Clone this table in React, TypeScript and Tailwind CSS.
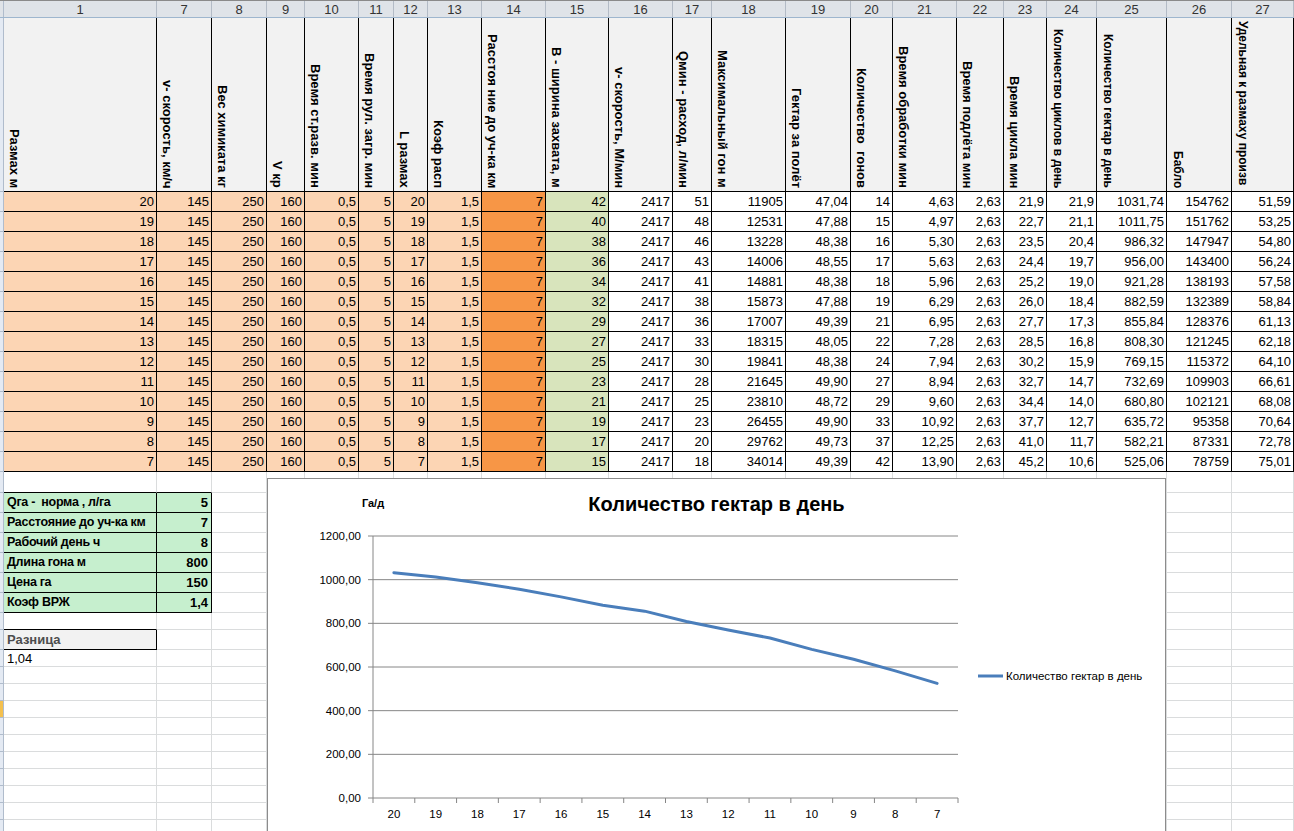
import React from "react";

const COLS =
  "grid grid-cols-[4px_153px_55px_55px_38px_54px_35px_34px_54px_64px_63px_64px_39px_74px_65px_42px_64px_47px_43px_50px_70px_65px_62px]";

const colNumbers = ["1", "7", "8", "9", "10", "11", "12", "13", "14", "15", "16", "17", "18", "19", "20", "21", "22", "23", "24", "25", "26", "27"];

const headers = [
  "Размах м",
  "v- скорость, км/ч",
  "Вес химиката кг",
  "V кр",
  "Время ст.разв. мин",
  "Время рул. загр. мин",
  "L размах",
  "Коэф расп",
  "Расстоя ние до уч-ка км",
  "В - ширина захвата, м",
  "v- скорость, М/мин",
  "Qмин - расход, л/мин",
  "Максимальный гон м",
  "Гектар за полёт",
  "Количество  гонов",
  "Время обработки мин",
  "Время подлёта мин",
  "Время цикла мин",
  "Количество циклов в день",
  "Количество гектар в день",
  "Бабло",
  "Удельная к размаху произв",
];

// m, B, Qмин, гон, га/полёт, гонов, обраб, цикл, циклов, га/день, бабло, удельная
const data = [
  ["20", "42", "51", "11905", "47,04", "14", "4,63", "21,9", "21,9", "1031,74", "154762", "51,59"],
  ["19", "40", "48", "12531", "47,88", "15", "4,97", "22,7", "21,1", "1011,75", "151762", "53,25"],
  ["18", "38", "46", "13228", "48,38", "16", "5,30", "23,5", "20,4", "986,32", "147947", "54,80"],
  ["17", "36", "43", "14006", "48,55", "17", "5,63", "24,4", "19,7", "956,00", "143400", "56,24"],
  ["16", "34", "41", "14881", "48,38", "18", "5,96", "25,2", "19,0", "921,28", "138193", "57,58"],
  ["15", "32", "38", "15873", "47,88", "19", "6,29", "26,0", "18,4", "882,59", "132389", "58,84"],
  ["14", "29", "36", "17007", "49,39", "21", "6,95", "27,7", "17,3", "855,84", "128376", "61,13"],
  ["13", "27", "33", "18315", "48,05", "22", "7,28", "28,5", "16,8", "808,30", "121245", "62,18"],
  ["12", "25", "30", "19841", "48,38", "24", "7,94", "30,2", "15,9", "769,15", "115372", "64,10"],
  ["11", "23", "28", "21645", "49,90", "27", "8,94", "32,7", "14,7", "732,69", "109903", "66,61"],
  ["10", "21", "25", "23810", "48,72", "29", "9,60", "34,4", "14,0", "680,80", "102121", "68,08"],
  ["9", "19", "23", "26455", "49,90", "33", "10,92", "37,7", "12,7", "635,72", "95358", "70,64"],
  ["8", "17", "20", "29762", "49,73", "37", "12,25", "41,0", "11,7", "582,21", "87331", "72,78"],
  ["7", "15", "18", "34014", "49,39", "42", "13,90", "45,2", "10,6", "525,06", "78759", "75,01"],
];

const params = [
  ["Qга -  норма , л/га", "5"],
  ["Расстояние до уч-ка км", "7"],
  ["Рабочий день ч", "8"],
  ["Длина гона м", "800"],
  ["Цена га", "150"],
  ["Коэф ВРЖ", "1,4"],
];

type LowerRow = { h: string; kind: "pre" | "param" | "preDiff" | "diff" | "val" | "blank"; label?: string; value?: string; selected?: boolean };

const lowerRows: LowerRow[] = [
  { h: "h-[21px]", kind: "pre" },
  ...params.map(([label, value]) => ({ h: "h-[20px]", kind: "param" as const, label, value })),
  { h: "h-[17px]", kind: "preDiff" },
  { h: "h-[20px]", kind: "diff" },
  { h: "h-[17px]", kind: "val" },
  { h: "h-[17px]", kind: "blank" },
  { h: "h-[17px]", kind: "blank" },
  { h: "h-[17px]", kind: "blank", selected: true },
  { h: "h-[17px]", kind: "blank" },
  { h: "h-[17px]", kind: "blank" },
  { h: "h-[17px]", kind: "blank" },
  { h: "h-[17px]", kind: "blank" },
  { h: "h-[17px]", kind: "blank" },
  { h: "h-[17px]", kind: "blank" },
  { h: "h-[17px]", kind: "blank" },
];

const haPerDay = [1031.74, 1011.75, 986.32, 956.0, 921.28, 882.59, 855.84, 808.3, 769.15, 732.69, 680.8, 635.72, 582.21, 525.06];

function cellBg(i: number) {
  if (i < 8) return "bg-[#fcd5b4]";
  if (i === 8) return "bg-[#f79646]";
  if (i === 9) return "bg-[#d8e4bc]";
  return "bg-white";
}

function Chart() {
  const X0 = 105;
  const X1 = 690;
  const Y0 = 319;
  const YT = 57;
  const step = (X1 - X0) / 14;
  const yOf = (v: number) => Y0 - (v / 1200) * (Y0 - YT);
  const ticks = [0, 200, 400, 600, 800, 1000, 1200];
  const points = haPerDay.map((v, i) => `${X0 + step * (i + 0.5)},${yOf(v)}`).join(" ");

  return (
    <div className="absolute left-[267px] top-[478px] h-[360px] w-[899px] border border-[#8c8c8c] bg-white">
      <div className="pt-[13px] text-center text-[20px] font-bold leading-[24px] text-black">Количество гектар в день</div>
      <svg className="absolute inset-0" width="897" height="358" viewBox="0 0 897 358">
        <text x="105" y="28" textAnchor="middle" fontSize="11" fontWeight="bold" fill="#000">
          Га/д
        </text>
        {ticks.map((v) => (
          <g key={v}>
            <line x1={X0 - 5} x2={X1} y1={yOf(v)} y2={yOf(v)} stroke="#868686" strokeWidth="1" />
            <text x={X0 - 12} y={yOf(v) + 4} textAnchor="end" fontSize="11.5" fill="#000">
              {v.toFixed(2).replace(".", ",")}
            </text>
          </g>
        ))}
        <line x1={X0} x2={X0} y1={YT} y2={Y0} stroke="#868686" strokeWidth="1" />
        {Array.from({ length: 15 }).map((_, i) => (
          <line key={i} x1={X0 + step * i} x2={X0 + step * i} y1={Y0} y2={Y0 + 5} stroke="#868686" strokeWidth="1" />
        ))}
        {data.map((r, i) => (
          <text key={r[0]} x={X0 + step * (i + 0.5)} y={Y0 + 20} textAnchor="middle" fontSize="11.5" fill="#000">
            {r[0]}
          </text>
        ))}
        <polyline points={points} fill="none" stroke="#4a7ebb" strokeWidth="3" strokeLinejoin="round" strokeLinecap="round" />
        <line x1="710" x2="735" y1="197" y2="197" stroke="#4a7ebb" strokeWidth="3" />
        <text x="738" y="201" fontSize="11.5" fill="#000">
          Количество гектар в день
        </text>
      </svg>
    </div>
  );
}

export default function App() {
  return (
    <div className="relative h-[831px] w-[1294px] overflow-hidden bg-white font-['Liberation_Sans',Arial,sans-serif] text-[13px] text-black">
      {/* column numbers */}
      <div className={`${COLS} h-[18px] border-t border-b border-t-[#8a8a8a] border-b-[#9eb6ce] bg-[#dfe3e8]`}>
        <div className="border-r border-[#b0bccc] bg-[#dfe3e8]" />
        {colNumbers.map((n) => (
          <div key={n} className="flex items-center justify-center border-r border-[#b3bbc6] text-[13px] leading-none text-[#333]">
            {n}
          </div>
        ))}
      </div>

      {/* rotated headers */}
      <div className={`${COLS} h-[174px]`}>
        <div className="border-r border-b border-[#b0bccc] bg-[#e4eaf3]" />
        {headers.map((h, i) => (
          <div
            key={h}
            className={`flex overflow-hidden border-r border-b border-black bg-[#f2f2f2] pl-[3px] ${i === headers.length - 1 ? "items-start pt-[3px]" : "items-end pb-[3px]"}`}
          >
            <span
              className={`whitespace-pre font-bold leading-[15px] [writing-mode:vertical-rl] ${i >= 18 ? "text-[12px]" : "text-[13px]"}`}
            >
              {h}
            </span>
          </div>
        ))}
      </div>

      {/* data rows */}
      {data.map((r) => {
        const cells = ["145", "250", "160", "0,5", "5"];
        const row = [r[0], ...cells, r[0], "1,5", "7", r[1], "2417", r[2], r[3], r[4], r[5], r[6], "2,63", r[7], r[8], r[9], r[10], r[11]];
        return (
          <div key={r[0]} className={`${COLS} h-[20px]`}>
            <div className="border-r border-b border-[#b0bccc] bg-[#e4eaf3]" />
            {row.map((v, i) => (
              <div key={i} className={`flex items-center justify-end border-r border-b border-black pr-[2px] leading-none ${cellBg(i)}`}>
                {v}
              </div>
            ))}
          </div>
        );
      })}

      {/* lower area */}
      {lowerRows.map((lr, ri) => (
        <div key={ri} className={`${COLS} ${lr.h}`}>
          <div className={`border-r border-b border-[#b0bccc] ${lr.selected ? "bg-[#f4c04e]" : "bg-[#e4eaf3]"}`} />
          {colNumbers.map((n, ci) => {
            if (ci === 0 && lr.kind === "param")
              return (
                <div
                  key={n}
                  className="flex items-center whitespace-pre border-r border-b border-black bg-[#c6efce] pl-[3px] text-[12.5px] font-bold leading-none tracking-[-0.3px]"
                >
                  {lr.label}
                </div>
              );
            if (ci === 1 && lr.kind === "param")
              return (
                <div key={n} className="flex items-center justify-end border-r border-b border-black bg-[#c6efce] pr-[3px] font-bold leading-none">
                  {lr.value}
                </div>
              );
            if (ci === 0 && lr.kind === "diff")
              return (
                <div key={n} className="flex items-center border-r border-b border-black bg-[#f2f2f2] pl-[3px] font-bold leading-none text-[#4d4d4d]">
                  Разница
                </div>
              );
            if (ci === 0 && lr.kind === "val")
              return (
                <div key={n} className="flex items-center border-r border-b border-[#dadcdd] pl-[3px] leading-none">
                  1,04
                </div>
              );
            const blackBottom = (lr.kind === "pre" && ci < 2) || (lr.kind === "preDiff" && ci === 0);
            return (
              <div key={n} className={`border-r border-b border-r-[#dadcdd] ${blackBottom ? "border-b-black" : "border-b-[#dadcdd]"}`} />
            );
          })}
        </div>
      ))}

      <Chart />
    </div>
  );
}
